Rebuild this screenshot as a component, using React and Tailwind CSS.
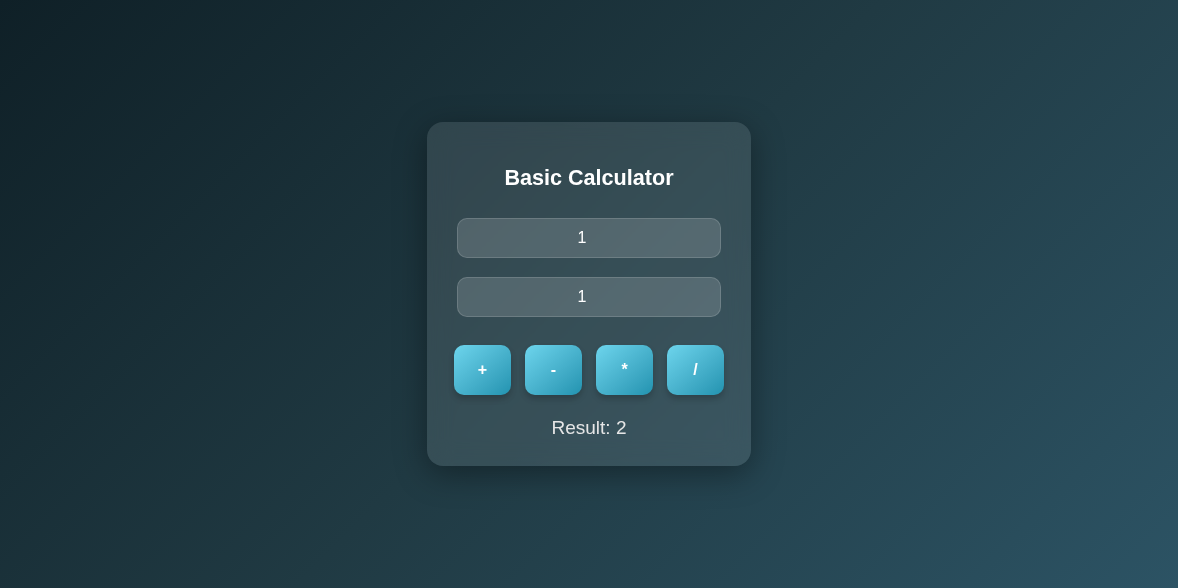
import React, { useState } from 'react';

const ops = ['+', '-', '*', '/'];

const App = () => {
  const [a, setA] = useState('1');
  const [b, setB] = useState('1');
  const [result, setResult] = useState(2);

  const calc = (op) => {
    const x = parseFloat(a);
    const y = parseFloat(b);
    if (isNaN(x) || isNaN(y)) return setResult('Invalid');
    if (op === '+') setResult(x + y);
    if (op === '-') setResult(x - y);
    if (op === '*') setResult(x * y);
    if (op === '/') setResult(y === 0 ? 'Error' : x / y);
  };

  return (
    <div
      className="w-full h-[588px] flex items-center justify-center bg-[linear-gradient(135deg,#0f2027,#203a43,#2c5364)]"
      style={{ fontFamily: '"Liberation Sans", Arial, sans-serif' }}
    >
      <div className="w-[324px] h-[344px] rounded-[16px] bg-white/10 shadow-[0_8px_32px_rgba(0,0,0,0.37)] backdrop-blur-md px-[30px] pt-[43px] flex flex-col items-center">
        <h2 className="text-[21.6px] leading-[26px] font-bold text-white">Basic Calculator</h2>
        <input
          type="text"
          value={a}
          onChange={(e) => setA(e.target.value)}
          className="mt-[27px] w-full h-[40px] rounded-[10px] bg-white/15 border border-white/15 pr-[14px] text-center text-white text-[16px] outline-none"
        />
        <input
          type="text"
          value={b}
          onChange={(e) => setB(e.target.value)}
          className="mt-[19px] w-full h-[40px] rounded-[10px] bg-white/15 border border-white/15 pr-[14px] text-center text-white text-[16px] outline-none"
        />
        <div className="mt-[28px] -mx-[3px] flex justify-center gap-[14px]">
          {ops.map((op) => (
            <button
              key={op}
              onClick={() => calc(op)}
              className="w-[57px] h-[50px] rounded-[10px] bg-linear-to-br from-[#6dd5ed] to-[#2193b0] text-white font-bold text-[16px] shadow-[0_4px_6px_rgba(0,0,0,0.2)]"
            >
              {op}
            </button>
          ))}
        </div>
        <p className="mt-[22px] text-[19px] leading-[22px] text-[#e6e6e6]">Result: {result}</p>
      </div>
    </div>
  );
};

export default App;
